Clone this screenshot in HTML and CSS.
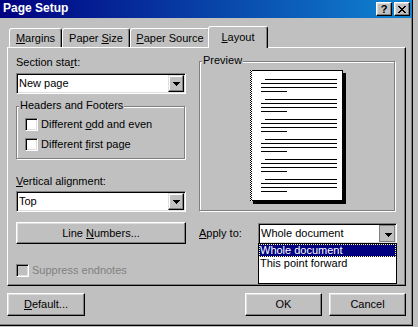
FILE: index.html
```html
<!DOCTYPE html>
<html>
<head>
<meta charset="utf-8">
<title>Page Setup</title>
<link rel="stylesheet" href="styles.css">
</head>
<body>
<div class="window">
  <div class="titlebar">
    <span class="title">Page Setup</span>
    <div class="caption-btns">
      <span class="cbtn help">?</span>
      <span class="cbtn close">
        <svg width="8" height="7" viewBox="0 0 8 7" shape-rendering="crispEdges">
          <rect x="0" y="0" width="2" height="1"/><rect x="6" y="0" width="2" height="1"/>
          <rect x="1" y="1" width="2" height="1"/><rect x="5" y="1" width="2" height="1"/>
          <rect x="2" y="2" width="4" height="1"/>
          <rect x="3" y="3" width="2" height="1"/>
          <rect x="2" y="4" width="4" height="1"/>
          <rect x="1" y="5" width="2" height="1"/><rect x="5" y="5" width="2" height="1"/>
          <rect x="0" y="6" width="2" height="1"/><rect x="6" y="6" width="2" height="1"/>
        </svg>
      </span>
    </div>
  </div>
  <div class="content">
    <div class="tabs">
      <div class="tab t-margins"><u>M</u>argins</div>
      <div class="tab t-size">Paper <u>S</u>ize</div>
      <div class="tab t-source"><u>P</u>aper Source</div>
      <div class="tab t-layout active"><u>L</u>ayout</div>
    </div>
    <div class="panel">
      <div class="col-left">
        <div class="label">Section sta<u>r</u>t:</div>
        <div class="combo c-section">
          <span class="combo-text">New page</span>
          <span class="combo-btn"><svg width="7" height="4" viewBox="0 0 7 4" shape-rendering="crispEdges"><rect x="0" y="0" width="7" height="1"/><rect x="1" y="1" width="5" height="1"/><rect x="2" y="2" width="3" height="1"/><rect x="3" y="3" width="1" height="1"/></svg></span>
        </div>
        <div class="group hf">
          <div class="group-label">Headers and Footers</div>
          <div class="check c-first"><span class="box"></span><span>Different <u>o</u>dd and even</span></div>
          <div class="check c-second"><span class="box"></span><span>Different <u>f</u>irst page</span></div>
        </div>
        <div class="label lbl-valign"><u>V</u>ertical alignment:</div>
        <div class="combo c-valign">
          <span class="combo-text">Top</span>
          <span class="combo-btn"><svg width="7" height="4" viewBox="0 0 7 4" shape-rendering="crispEdges"><rect x="0" y="0" width="7" height="1"/><rect x="1" y="1" width="5" height="1"/><rect x="2" y="2" width="3" height="1"/><rect x="3" y="3" width="1" height="1"/></svg></span>
        </div>
        <div class="btn btn-line"><span>Line <u>N</u>umbers...</span></div>
        <div class="check suppress"><span class="box"></span><span>Suppress endnotes</span></div>
      </div>
      <div class="col-right">
        <div class="group preview">
          <div class="group-label">Preview</div>
          <svg class="page" width="96" height="134" viewBox="0 0 96 134" shape-rendering="crispEdges">
            <defs>
              <pattern id="chk" width="2" height="2" patternUnits="userSpaceOnUse">
                <rect x="0" y="0" width="2" height="2" fill="#fff"/>
                <rect x="0" y="0" width="1" height="1" fill="#000"/>
                <rect x="1" y="1" width="1" height="1" fill="#000"/>
              </pattern>
            </defs>
            <rect x="3" y="3" width="93" height="131" fill="#000"/>
            <rect x="0" y="0" width="93" height="131" fill="#fff"/>
            <rect x="0" y="0" width="93" height="1" fill="#000"/>
            <rect x="92" y="0" width="1" height="131" fill="#000"/>
            <rect x="0" y="130" width="93" height="1" fill="#000"/>
            <rect x="0" y="0" width="2" height="131" fill="url(#chk)"/>
            <g fill="#000">
              <rect x="15" y="9" width="72" height="1"/><rect x="11" y="13" width="76" height="1"/><rect x="11" y="17" width="76" height="1"/><rect x="11" y="21" width="26" height="1"/>
              <rect x="15" y="29" width="72" height="1"/><rect x="11" y="33" width="76" height="1"/><rect x="11" y="37" width="76" height="1"/><rect x="11" y="41" width="26" height="1"/>
              <rect x="15" y="49" width="72" height="1"/><rect x="11" y="53" width="76" height="1"/><rect x="11" y="57" width="76" height="1"/><rect x="11" y="61" width="26" height="1"/>
              <rect x="15" y="69" width="72" height="1"/><rect x="11" y="73" width="76" height="1"/><rect x="11" y="77" width="76" height="1"/><rect x="11" y="81" width="26" height="1"/>
              <rect x="15" y="89" width="72" height="1"/><rect x="11" y="93" width="76" height="1"/><rect x="11" y="97" width="76" height="1"/><rect x="11" y="101" width="26" height="1"/>
              <rect x="15" y="109" width="72" height="1"/><rect x="11" y="113" width="76" height="1"/><rect x="11" y="117" width="76" height="1"/><rect x="11" y="121" width="26" height="1"/>
            </g>
          </svg>
        </div>
        <div class="apply-row">
          <span class="label"><u>A</u>pply to:</span>
          <div class="combo c-apply">
            <span class="combo-text">Whole document</span>
            <span class="combo-btn pressed"><svg width="7" height="4" viewBox="0 0 7 4" shape-rendering="crispEdges"><rect x="0" y="0" width="7" height="1"/><rect x="1" y="1" width="5" height="1"/><rect x="2" y="2" width="3" height="1"/><rect x="3" y="3" width="1" height="1"/></svg></span>
            <div class="dropdown">
              <div class="opt sel">Whole document</div>
              <div class="opt">This point forward</div>
            </div>
          </div>
        </div>
      </div>
    </div>
    <div class="footer">
      <div class="btn btn-default"><span><u>D</u>efault...</span></div>
      <div class="btn btn-ok"><span>OK</span></div>
      <div class="btn btn-cancel"><span>Cancel</span></div>
    </div>
  </div>
</div>
</body>
</html>
```
FILE: styles.css
```css
html, body {
  margin: 0;
  padding: 0;
  background: #c0c0c0;
}
body {
  width: 418px;
  height: 327px;
  overflow: hidden;
  font-family: "Liberation Sans", Arial, sans-serif;
  font-size: 11px;
  line-height: 13px;
  color: #000;
}
u { text-decoration: underline; }

.window {
  width: 413px;
  height: 326px;
  box-sizing: border-box;
  border-right: 1px solid #000;
  border-bottom: 1px solid #000;
  box-shadow: inset -1px -1px #808080;
  display: flex;
  flex-direction: column;
}

.titlebar {
  height: 18px;
  flex: none;
  background: linear-gradient(to right, #000080, #1084d0);
  display: flex;
  align-items: center;
  justify-content: space-between;
  padding: 0 2px 0 3px;
}
.title {
  color: #fff;
  font-weight: bold;
  font-size: 12px;
  line-height: 13px;
  margin-bottom: 2px;
}
.caption-btns {
  display: flex;
  gap: 2px;
}
.cbtn {
  width: 16px;
  height: 14px;
  box-sizing: border-box;
  background: #c0c0c0;
  border: 1px solid;
  border-color: #fff #000 #000 #fff;
  box-shadow: inset -1px -1px #808080, inset 1px 1px #dfdfdf;
  display: flex;
  align-items: center;
  justify-content: center;
}
.cbtn.help {
  font-weight: bold;
  font-size: 11px;
  line-height: 11px;
}

.content {
  flex: 1;
  padding: 8px 6px 0 7px;
  display: flex;
  flex-direction: column;
}

.tabs {
  display: flex;
  align-items: flex-end;
  height: 21px;
  padding-left: 2px;
}
.tab {
  height: 19px;
  box-sizing: border-box;
  border: 1px solid;
  border-bottom: none;
  border-color: #fff #000 transparent #fff;
  box-shadow: inset -1px 0 #808080;
  border-radius: 3px 3px 0 0;
  text-align: center;
  padding-top: 3px;
  background: #c0c0c0;
}
.t-margins { width: 53px; }
.t-size { width: 68px; }
.t-source { width: 80px; }
.tab.active {
  width: 60px;
  height: 22px;
  margin: 0 -2px -1px -2px;
  padding-top: 4px;
  position: relative;
  z-index: 1;
}

.panel {
  height: 239px;
  box-sizing: border-box;
  border: 1px solid;
  border-color: #fff #000 #000 #fff;
  box-shadow: inset -1px -1px #808080;
  padding: 8px 8px 0 8px;
  display: flex;
  gap: 13px;
}
.col-left {
  width: 170px;
  display: flex;
  flex-direction: column;
}
.col-right {
  width: 198px;
  display: flex;
  flex-direction: column;
}

.label {
  height: 13px;
  white-space: nowrap;
}

.combo {
  height: 21px;
  box-sizing: border-box;
  border: 1px solid;
  border-color: #808080 #fff #fff #808080;
  box-shadow: inset 1px 1px #000, inset -1px -1px #dfdfdf;
  background: #fff;
  display: flex;
  align-items: center;
  padding: 1px;
}
.combo-text {
  flex: 1;
  padding-left: 1px;
  white-space: nowrap;
}
.combo-btn {
  width: 16px;
  height: 17px;
  box-sizing: border-box;
  background: #c0c0c0;
  border: 1px solid;
  border-color: #dfdfdf #000 #000 #dfdfdf;
  box-shadow: inset -1px -1px #808080, inset 1px 1px #fff;
  display: flex;
  align-items: center;
  justify-content: center;
}
.combo-btn.pressed {
  border-color: #808080;
  box-shadow: none;
}
.combo-btn.pressed svg {
  position: relative;
  left: 1px;
  top: 1px;
}
.c-section { margin-top: 4px; }
.c-valign { margin-top: 3px; }

.group {
  box-sizing: border-box;
  border: 1px solid #808080;
  box-shadow: inset 1px 1px #fff, 1px 1px #fff;
}
.group-label {
  width: fit-content;
  background: #c0c0c0;
  padding: 0 1px;
  margin-top: -8px;
  white-space: nowrap;
}
.hf {
  margin-top: 12px;
  width: 169px;
  height: 53px;
  padding-left: 8px;
}
.hf .group-label { margin-left: -6px; }

.check {
  display: flex;
  align-items: center;
  height: 13px;
  white-space: nowrap;
}
.c-first { margin-top: 6px; }
.c-second { margin-top: 7px; }
.box {
  width: 13px;
  height: 13px;
  flex: none;
  box-sizing: border-box;
  border: 1px solid;
  border-color: #808080 #fff #fff #808080;
  box-shadow: inset 1px 1px #000, inset -1px -1px #dfdfdf;
  background: #fff;
  margin-right: 3px;
}
.suppress {
  margin-top: 20px;
  color: #808080;
}
.suppress .box { background: #c0c0c0; }

.lbl-valign { margin-top: 16px; }

.btn {
  height: 23px;
  box-sizing: border-box;
  border: 1px solid;
  border-color: #fff #000 #000 #fff;
  box-shadow: inset -1px -1px #808080, inset 1px 1px #dfdfdf;
  background: #c0c0c0;
  display: flex;
  align-items: center;
  justify-content: center;
  white-space: nowrap;
}
.btn-line {
  margin-top: 10px;
  height: 22px;
}

.preview {
  margin-top: 5px;
  width: 196px;
  height: 150px;
  display: flex;
  flex-direction: column;
}
.preview .group-label { margin-left: 2px; }
.page {
  display: block;
  margin: 3px 0 0 50px;
}

.apply-row {
  margin-top: 12px;
  height: 21px;
  display: flex;
  align-items: center;
  justify-content: space-between;
}
.c-apply {
  width: 139px;
  position: relative;
}
.dropdown {
  position: absolute;
  left: -1px;
  right: -1px;
  top: 19px;
  height: 41px;
  box-sizing: border-box;
  background: #fff;
  border: 1px solid #000;
  z-index: 2;
}
.opt {
  height: 13px;
  box-sizing: border-box;
  border: 1px solid transparent;
  line-height: 11px;
  white-space: nowrap;
}
.opt.sel {
  background: #000080;
  color: #fff;
  border: 1px dotted #ffff80;
}

.footer {
  display: flex;
  margin-top: 7px;
}
.btn-default { width: 78px; }
.btn-ok { width: 77px; margin-left: auto; }
.btn-cancel { width: 77px; margin-left: 7px; }
```
